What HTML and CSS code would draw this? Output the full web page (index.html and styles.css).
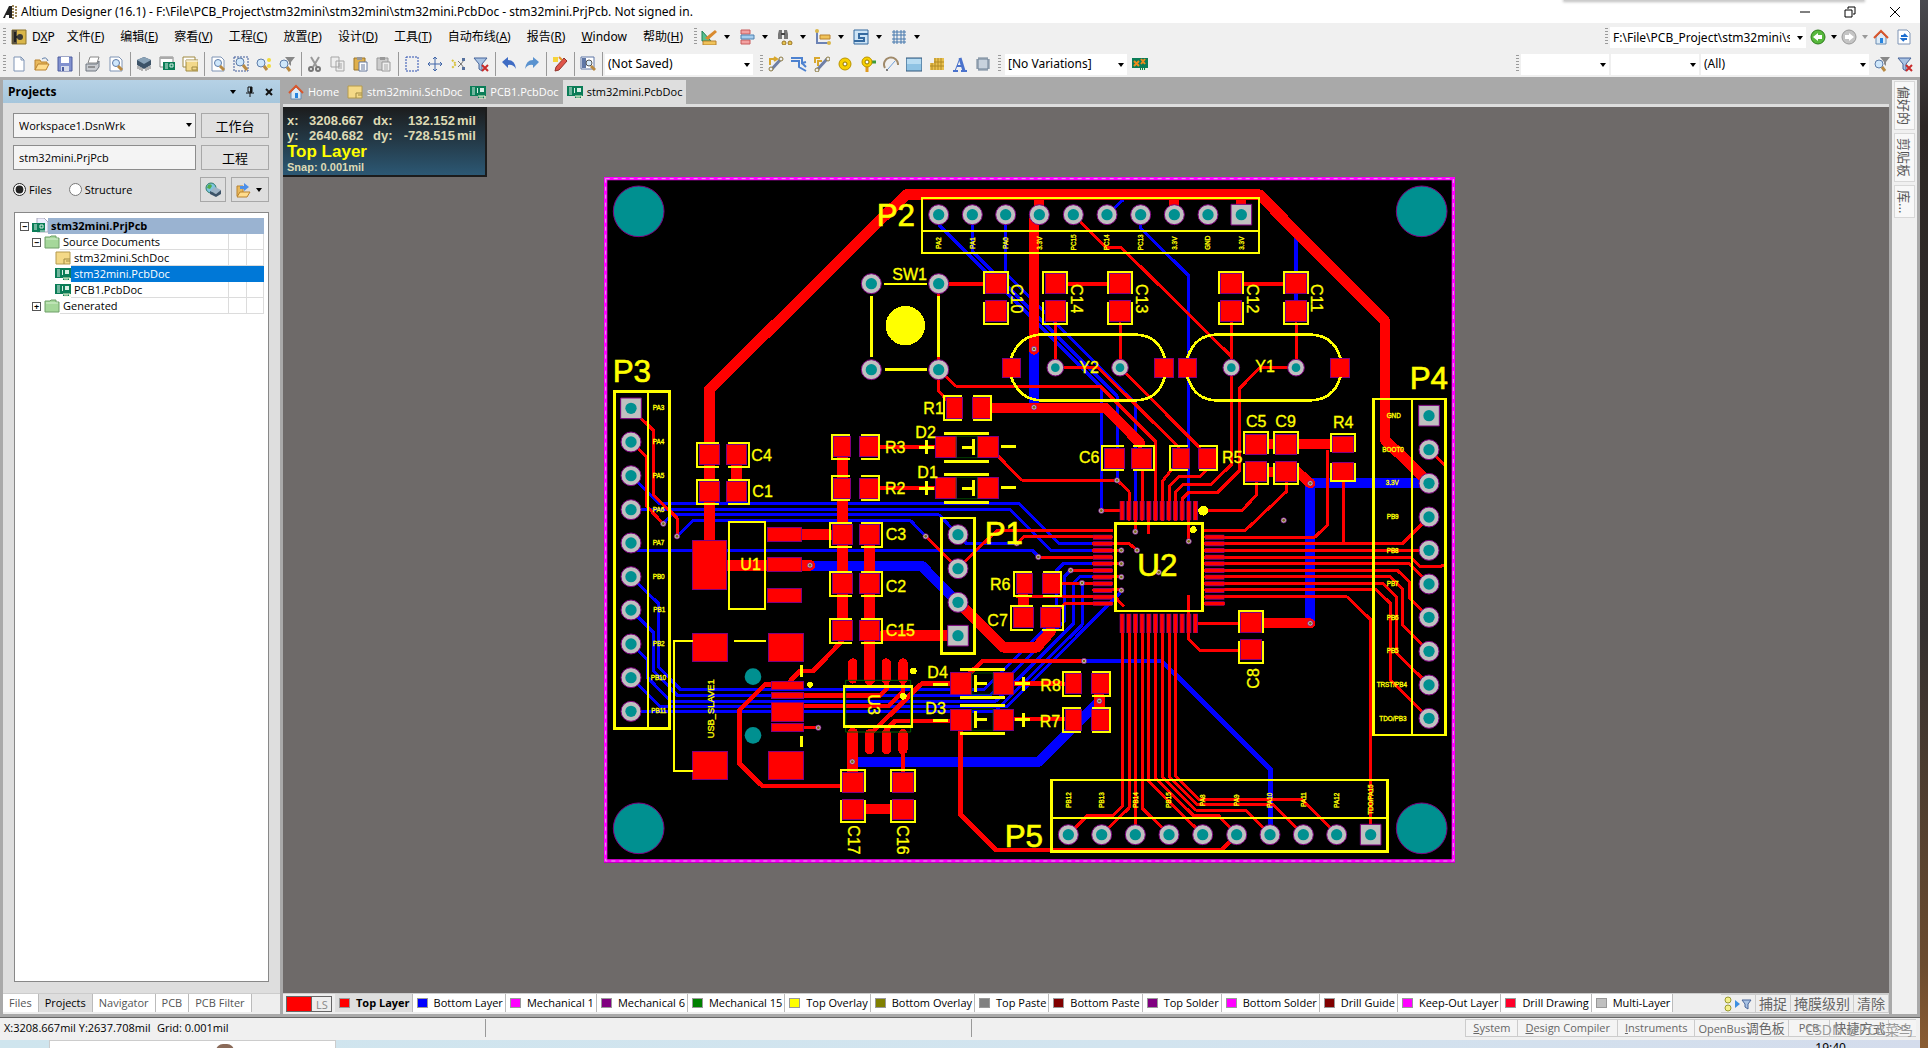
FILE: index.html
```html
<!DOCTYPE html>
<html lang="zh-CN">
<head>
<meta charset="utf-8">
<title>Altium Designer (16.1)</title>
<link rel="stylesheet" href="styles.css">
</head>
<body>
<svg class="defs" aria-hidden="true">
  <defs>
    <symbol id="i-logo" viewBox="0 0 16 16"><path d="M1 14 7 2h3v12H7v-3H4l-1 3z" fill="#222"/><path d="M11 1v14M14 2v12" stroke="#a08a5c" stroke-width="2" stroke-dasharray="2 1"/></symbol>
    <symbol id="i-dxp" viewBox="0 0 16 16"><path d="M1 1h14v14H1z" fill="#d9b64a" stroke="#8d742b"/><path d="M1 1h5v14H1z" fill="#5c5440"/><path d="M4 3v10M4 8h3" stroke="#222" stroke-width="2"/><circle cx="9" cy="8" r="3" fill="#3b3a36"/></symbol>
    <symbol id="i-new" viewBox="0 0 16 16"><path d="M3 1h7l3 3v11H3z" fill="#fff" stroke="#7f94b5"/><path d="M10 1v3h3" fill="none" stroke="#7f94b5"/></symbol>
    <symbol id="i-open" viewBox="0 0 16 16"><path d="M1 14V4h5l1 2h6v2" fill="#e9b95c" stroke="#b9822e"/><path d="m1 14 3-6h11l-3 6z" fill="#ffdc8c" stroke="#b9822e"/><path d="M8 3q4-3 6 2" fill="none" stroke="#5d7ca8"/></symbol>
    <symbol id="i-save" viewBox="0 0 16 16"><path d="M1 1h14v14H1z" fill="#8191cf" stroke="#4c5d9f"/><path d="M4 1h8v6H4z" fill="#fff"/><path d="M4 10h8v5H4z" fill="#d6dcec"/><path d="M5 11h2v4H5z" fill="#4c5d9f"/></symbol>
    <symbol id="i-print" viewBox="0 0 16 16"><path d="m5 1 9 0-2 6H3z" fill="#fff" stroke="#888"/><path d="M1 8h11l2-3v6l-3 4H1z" fill="#c9ccd1" stroke="#6f7680"/><path d="M3 11h7" stroke="#555"/></symbol>
    <symbol id="i-zoompage" viewBox="0 0 16 16"><path d="M2 1h9l3 3v11H2z" fill="#fff" stroke="#7f94b5"/><circle cx="8" cy="7" r="3.500" fill="#cfe7fb" stroke="#5d7ca8"/><path d="m10 10 4 4" stroke="#b98a43" stroke-width="3"/></symbol>
    <symbol id="i-chip" viewBox="0 0 16 16"><path d="m8 1 7 3v5l-7 4-7-4V4z" fill="#3d5368"/><path d="m8 1 7 3-7 4-7-4z" fill="#8aa3b8"/><path d="M2 10v3M4 11v3M6 12v3M10 12v3M12 11v3M14 10v3" stroke="#777"/></symbol>
    <symbol id="i-pcb" viewBox="0 0 16 16"><path d="M0 2h16v10h-2v2H8v-2H0z" fill="#0b7d57"/><path d="M2 4h3M2 6h3M2 8h3M2 10h3" stroke="#d8efe5"/><path d="M7 4h1v5H7zM10 4h4v4h-4z" fill="#d8efe5"/><path d="M8 12h7v3M10 12v3M12 12v3" stroke="#e8f4d0" fill="none"/></symbol>
    <symbol id="i-pcbwin" viewBox="0 0 16 16"><path d="M1 1h13v10H1z" fill="#fff" stroke="#888"/><path d="M1 1h13v2H1z" fill="#aaa"/><path d="M4 6h12v8H4z" fill="#0b7d57"/><path d="M6 8h3M6 10h3M6 12h3M11 8h3v3h-3z" stroke="#d8efe5" fill="none"/></symbol>
    <symbol id="i-sheets" viewBox="0 0 16 16"><path d="M1 1h12v10H1z" fill="#fff" stroke="#a08a43"/><path d="M4 4h12v11H4z" fill="#f2d88a" stroke="#a08a43"/><path d="M4 5h12" stroke="#fff"/><path d="M10 11h5v3h-5z" fill="none" stroke="#a08a43"/></symbol>
    <symbol id="i-sch" viewBox="0 0 16 16"><path d="M1 2h14v12H1z" fill="#f4d987" stroke="#b49a4e"/><path d="M9 9h6M9 9v5M11 11h4" fill="none" stroke="#a08a43"/></symbol>
    <symbol id="i-zoomsel" viewBox="0 0 16 16"><path d="M1 1h14v14H1z" fill="none" stroke="#3f5b9b" stroke-dasharray="2 1"/><circle cx="7" cy="6" r="4" fill="#cfe7fb" stroke="#5d7ca8"/><path d="m10 9 4 5" stroke="#b98a43" stroke-width="3"/></symbol>
    <symbol id="i-zoompt" viewBox="0 0 16 16"><circle cx="5" cy="7" r="4" fill="#cfe7fb" stroke="#5d7ca8"/><path d="m8 10 3 4" stroke="#b98a43" stroke-width="3"/><circle cx="13" cy="4" r="2" fill="#f1dc3c"/><circle cx="13" cy="10" r="2" fill="#f1dc3c"/></symbol>
    <symbol id="i-zoomflt" viewBox="0 0 16 16"><path d="M6 1h10l-4 5v4l-2-2V6z" fill="#888"/><circle cx="5" cy="8" r="4" fill="#cfe7fb" stroke="#5d7ca8"/><path d="m8 11 3 4" stroke="#b98a43" stroke-width="3"/></symbol>
    <symbol id="i-cut" viewBox="0 0 16 16"><path d="M4 1l6 10M12 1 6 11" stroke="#999" stroke-width="2"/><circle cx="4" cy="13" r="2" fill="none" stroke="#777" stroke-width="2"/><circle cx="11" cy="13" r="2" fill="none" stroke="#777" stroke-width="2"/></symbol>
    <symbol id="i-copy" viewBox="0 0 16 16"><path d="M1 1h8v10H1zM6 5h8v10H6z" fill="#eee" stroke="#a5a5a5"/><path d="M8 8h4M8 10h4M8 12h4" stroke="#a5a5a5"/></symbol>
    <symbol id="i-paste" viewBox="0 0 16 16"><path d="M1 2h11v12H1z" fill="#e0b04c" stroke="#9a7428"/><path d="M4 1h5v3H4z" fill="#999"/><path d="M6 6h8v9H6z" fill="#fff" stroke="#66789c"/><path d="M8 9h4M8 11h4M8 13h4" stroke="#66789c"/></symbol>
    <symbol id="i-pasteg" viewBox="0 0 16 16"><path d="M1 2h11v12H1z" fill="#ccc" stroke="#999"/><path d="M4 1h5v3H4z" fill="#999"/><path d="M6 6h8v9H6z" fill="#eee" stroke="#999"/><path d="M8 9h4M8 11h4M8 13h4" stroke="#aaa"/></symbol>
    <symbol id="i-marq" viewBox="0 0 16 16"><path d="M2 1h12v14H2z" fill="none" stroke="#2a4fb0" stroke-dasharray="2 1"/></symbol>
    <symbol id="i-move" viewBox="0 0 16 16"><path d="M8 1v14M1 8h14M6 3l2-2 2 2M6 13l2 2 2-2M3 6 1 8l2 2M13 6l2 2-2 2" fill="none" stroke="#3f65a8"/></symbol>
    <symbol id="i-desel" viewBox="0 0 16 16"><path d="m2 4 4 4-4 4" fill="none" stroke="#d8c23a" stroke-width="2" stroke-dasharray="2 1"/><path d="m8 5 3 3-3 3M14 4l-3 4 3 4" fill="none" stroke="#777"/><path d="M12 2h3v3h-3zM12 11h3v3h-3z" fill="#56719d"/></symbol>
    <symbol id="i-clear" viewBox="0 0 16 16"><path d="M1 2h13L9 8v7l-3-2V8z" fill="#a9c3e4" stroke="#47659a"/><path d="m9 9 6 6M15 9l-6 6" stroke="#c92b2b" stroke-width="2"/></symbol>
    <symbol id="i-undo" viewBox="0 0 16 16"><path d="m1 6 6-5v3q7 0 8 9-3-5-8-4v3z" fill="#3f6cc4"/></symbol>
    <symbol id="i-redo" viewBox="0 0 16 16"><path d="m15 6-6-5v3Q2 4 1 13q3-5 8-4v3z" fill="#5a92cf"/></symbol>
    <symbol id="i-pen" viewBox="0 0 16 16"><path d="m3 15 1-4 8-9 3 3-8 9z" fill="#e0554a" stroke="#93342c"/><path d="M1 1h5v5H1z" fill="#f6d43a"/><path d="m7 1 3 3" stroke="#e7962e" stroke-width="2"/></symbol>
    <symbol id="i-browse" viewBox="0 0 16 16"><path d="M1 1h13v12H1z" fill="#fff" stroke="#5f77a6"/><path d="M2 2h4v10H2z" fill="#5f77a6"/><circle cx="9" cy="7" r="3" fill="#d8ecfc" stroke="#555"/><path d="m11 10 4 4" stroke="#b98a43" stroke-width="3"/></symbol>
    <symbol id="i-route" viewBox="0 0 16 16"><path d="M2 9V3h6M6 1l3 2-3 2" fill="none" stroke="#d9a82e" stroke-width="2"/><path d="m3 14 10-11" stroke="#6f7fa5" stroke-width="3"/><circle cx="13" cy="3" r="2" fill="#eee" stroke="#8b7a42"/><circle cx="3" cy="13" r="2" fill="#eee" stroke="#8b7a42"/></symbol>
    <symbol id="i-mroute" viewBox="0 0 16 16"><path d="M1 7V2h5M4 10V5h4" fill="none" stroke="#d9a82e" stroke-width="2"/><path d="m3 14 10-11" stroke="#6f7fa5" stroke-width="3"/><circle cx="14" cy="3" r="2" fill="#eee" stroke="#8b7a42"/><circle cx="3" cy="14" r="2" fill="#eee" stroke="#8b7a42"/></symbol>
    <symbol id="i-diff" viewBox="0 0 16 16"><path d="M0 2h11v5l4-1M0 5h8v6l7 4M11 7l4 4" fill="none" stroke="#4d82d0" stroke-width="2"/></symbol>
    <symbol id="i-pad" viewBox="0 0 16 16"><circle cx="8" cy="8" r="6" fill="#f7d000" stroke="#bb9400"/><circle cx="8" cy="8" r="2" fill="#fff" stroke="#8f7300"/></symbol>
    <symbol id="i-via" viewBox="0 0 16 16"><path d="M8 6h8" stroke="#3b9b3b" stroke-width="3"/><path d="M7 9v7" stroke="#e09a1e" stroke-width="3"/><circle cx="7" cy="6" r="5" fill="#f7d000" stroke="#bb9400"/><circle cx="7" cy="6" r="2" fill="#fff" stroke="#8f7300"/></symbol>
    <symbol id="i-arc" viewBox="0 0 16 16"><path d="M2 12A7 7 0 1 1 15 9" fill="none" stroke="#a08a6a" stroke-width="2"/><path d="m5 13 7-8" stroke="#6f9fd8"/><circle cx="4" cy="14" r="1" fill="#555"/></symbol>
    <symbol id="i-fill" viewBox="0 0 16 16"><path d="M0 2h16v13H0z" fill="#8fc3e4" stroke="#33567a"/><path d="M1 3h14v5H1z" fill="#b8dcf2"/></symbol>
    <symbol id="i-poly" viewBox="0 0 16 16"><path d="M5 2h10v12H1V7h4z" fill="#e9c04e"/><path d="M3 7v7M6 2v12M9 2v12M12 2v12M1 10h14M5 6h10" stroke="#b08a25"/></symbol>
    <symbol id="i-text" viewBox="0 0 16 16"><path d="m3 15 5-13" fill="none" stroke="#4a72cc"/><path d="m8 2 4 13" fill="none" stroke="#4a72cc" stroke-width="3"/><path d="M5 10h6M1 15h5M9 15h6" fill="none" stroke="#4a72cc" stroke-width="2"/></symbol>
    <symbol id="i-comp" viewBox="0 0 16 16"><path d="M4 1v14M6 1v14M8 1v14M10 1v14M12 1v14M1 4h14M1 6h14M1 8h14M1 10h14M1 12h14" stroke="#6b7e93"/><path d="M3 3h10v10H3z" fill="#c8d2dd" stroke="#6b7e93"/></symbol>
    <symbol id="i-var" viewBox="0 0 16 16"><path d="M0 2h16v10h-2v2H8v-2H0z" fill="#0b7d57"/><path d="m2 5 5 5M7 5l-5 5M9 3l4 5M13 3 9 8" stroke="#ef8b1c" stroke-width="2"/><path d="M9 13h6" stroke="#e8f4d0" stroke-width="2" stroke-dasharray="1 1"/></symbol>
    <symbol id="i-draw" viewBox="0 0 16 16"><path d="M1 2v10h9z" fill="#57c08e" stroke="#1f8257"/><path d="m4 9 10-8 2 2-9 8z" fill="#d98a2e"/><path d="M2 12h13v4H2z" fill="#f0c35a" stroke="#b9822e"/></symbol>
    <symbol id="i-align" viewBox="0 0 16 16"><path d="M2 1h9v4H2zM2 11h9v4H2z" fill="#f3a1a1" stroke="#c65b5b"/><path d="M2 6h13v4H2z" fill="#a6cdee" stroke="#4e81b0"/></symbol>
    <symbol id="i-find" viewBox="0 0 16 16"><path d="M2 1h3v9H1V5zM7 1h3l1 4v5H7z" fill="#777"/><path d="M4 4h4v2H4z" fill="#444"/><circle cx="7" cy="14" r="2" fill="#e6c44f" stroke="#9a7428"/><circle cx="13" cy="14" r="2" fill="#e6c44f" stroke="#9a7428"/></symbol>
    <symbol id="i-dim" viewBox="0 0 16 16"><path d="M2 3v11h11" fill="none" stroke="#6c83b5" stroke-width="2"/><path d="M5 6h10v4H5z" fill="#f0c35a" stroke="#b9822e"/><circle cx="2" cy="2" r="2" fill="#d9b64a"/><circle cx="14" cy="14" r="2" fill="#d9b64a"/></symbol>
    <symbol id="i-room" viewBox="0 0 16 16"><path d="M1 1h14v14H1z" fill="#cde4f6" stroke="#356aa0"/><path d="M15 5H6v4h5v3H1" fill="none" stroke="#356aa0" stroke-width="2"/></symbol>
    <symbol id="i-grid" viewBox="0 0 16 16"><path d="M3 1v14M6 1v14M10 1v14M13 1v14M1 3h14M1 6h14M1 10h14M1 13h14" stroke="#4779ad"/></symbol>
    <symbol id="i-home" viewBox="0 0 16 16"><path d="M3 8v7h10V8L8 3z" fill="#dcebf7" stroke="#6b8db3"/><path d="m1 9 7-7 7 7" fill="none" stroke="#d9562b" stroke-width="2"/><path d="M7 9h3v5H7z" fill="#2684e0"/></symbol>
    <symbol id="i-back" viewBox="0 0 16 16"><circle cx="8" cy="8" r="7" fill="#57b83c" stroke="#2c7d1a"/><path d="m3 8 5-4v2h4v4H8v2z" fill="#fff"/></symbol>
    <symbol id="i-fwd" viewBox="0 0 16 16"><circle cx="8" cy="8" r="7" fill="#c4c4c4" stroke="#999"/><path d="M13 8 8 4v2H4v4h4v2z" fill="#fff"/></symbol>
    <symbol id="i-refresh" viewBox="0 0 16 16"><path d="M2 1h9l3 3v11H2z" fill="#fff" stroke="#7f94b5"/><path d="M5 7h5l-2-2M11 10H6l2 2" fill="none" stroke="#1f6fd0" stroke-width="2"/></symbol>
    <symbol id="i-globe" viewBox="0 0 16 16"><circle cx="6" cy="6" r="5" fill="#7fc3e0" stroke="#2c7d6a"/><path d="M3 3q3-2 4 1L5 7 2 6z" fill="#4fae4a"/><path d="m10 5 6 3-5 4-6-3z" fill="#9fb4c6"/><path d="m5 9 6 3 5-4v4l-5 3-6-3z" fill="#3d5368"/></symbol>
    <symbol id="i-openp" viewBox="0 0 16 16"><path d="M2 4h6v10H2z" fill="#e9b95c" stroke="#b9822e"/><path d="M5 4h4V1l5 4-5 4V7H5z" fill="#4d8fe8"/><path d="m2 15 3-5h10l-3 5z" fill="#ffdc8c" stroke="#b9822e"/></symbol>
    <symbol id="i-proj" viewBox="0 0 16 16"><path d="M5 0h7l4 4v10H5z" fill="#eef" stroke="#aab"/><path d="M0 5h13v9H0z" fill="#0b7d57"/><path d="M2 7h3M2 9h3M2 11h3M8 7h3v3H8zM8 13h5" stroke="#d8efe5" fill="none"/></symbol>
    <symbol id="i-folder" viewBox="0 0 16 16"><path d="M1 14V3h5l1-1h5v2h3v10z" fill="#a5d79a" stroke="#6f9f68"/><path d="M2 5h12" stroke="#d8f0d2"/></symbol>
    <symbol id="i-mask" viewBox="0 0 28 16"><circle cx="4" cy="4" r="3" fill="#f4f08a" stroke="#9a9a30"/><circle cx="4" cy="12" r="3" fill="#f4f08a" stroke="#9a9a30"/><path d="m11 4 5 4-5 4z" fill="#3d8fe0"/><path d="M18 4h9l-3 4v5l-3-2V8z" fill="#a9c3e4" stroke="#47659a"/></symbol>
    <symbol id="i-pin" viewBox="0 0 10 12"><path d="M3 1h4v5H3zM1 7h8M5 7v4" fill="none" stroke="#111"/><path d="M6 1v6" stroke="#111" stroke-width="2"/></symbol>
    <symbol id="i-close" viewBox="0 0 10 10"><path d="m2 2 6 6M8 2 2 8" stroke="#111" stroke-width="2"/></symbol>
    <symbol id="i-wmin" viewBox="0 0 12 12"><path d="M1 6h10" stroke="#000"/></symbol>
    <symbol id="i-wmax" viewBox="0 0 12 12"><path d="M1 4h7v7H1zM4 3V1h7v7H9" fill="none" stroke="#000"/></symbol>
    <symbol id="i-wclose" viewBox="0 0 12 12"><path d="m1 1 10 10M11 1 1 11" stroke="#000"/></symbol>

    <g id="pin"><circle r="30" fill="#c0c0c0" stroke="#800080" stroke-width="3"/><circle r="17" fill="#009090"/></g>
    <g id="pinsq"><path d="M-31-31h62v62h-62z" fill="#c0c0c0" stroke="#800080" stroke-width="3"/><circle r="17" fill="#009090"/></g>
    <g id="pinsm"><circle r="25" fill="#c0c0c0" stroke="#800080" stroke-width="3"/><circle r="13" fill="#009090"/></g>
    <g id="via"><circle r="8" fill="#c0c0c0" stroke="#800080" stroke-width="2"/><circle r="4" fill="#7a6414"/></g>
    <g id="hole"><circle r="76" fill="#009090" stroke="#800080" stroke-width="3"/></g>
    <g id="cap"><path class="pad" d="M-71-30h60v61h-60zM10-30h60v61h-60z"/><path class="ol" d="M-12-36H-78V36H-12M14-36H78V36H14"/></g>
    <g id="res"><path class="pad" d="M-64-30h50v61h-50zM14-30h54v61h-54z"/><path class="ol" d="M-16-36H-70V36H-16M16-36H71V36H16"/></g>
    <g id="dio"><path class="pad" d="M-95-32h62v64h-62zM31-32h64v64h-64z"/><path d="M-33-32h64v64h-64z" fill="none" stroke="#006000" stroke-width="2"/><path class="ol8" d="M-69-42H67M-69 42H67M19-25V25M-16 0H19M-143 0h44M-123-21v42M103-3h44"/></g>
  </defs>
</svg>

<div class="window">
  <header class="title"><svg class="ic"><use href="#i-logo"/></svg><h1>Altium Designer (16.1) - F:\File\PCB_Project\stm32mini\stm32mini\stm32mini.PcbDoc - stm32mini.PrjPcb. Not signed in.</h1>
    <div class="wbtns"><button aria-label="Minimize"><svg><use href="#i-wmin"/></svg></button><button aria-label="Restore"><svg><use href="#i-wmax"/></svg></button><button aria-label="Close"><svg><use href="#i-wclose"/></svg></button></div>
    <i class="shade"></i>
  </header>

  <nav class="bar menu">
    <i class="grip"></i>
    <button class="dxp"><svg class="ic"><use href="#i-dxp"/></svg><span>D<u>X</u>P</span></button>
    <button>文件(<u>F</u>)</button><button>编辑(<u>E</u>)</button><button>察看(<u>V</u>)</button><button>工程(<u>C</u>)</button><button>放置(<u>P</u>)</button><button>设计(<u>D</u>)</button><button>工具(<u>T</u>)</button><button>自动布线(<u>A</u>)</button><button>报告(<u>R</u>)</button><button><u>W</u>indow</button><button>帮助(<u>H</u>)</button>
    <i class="grip"></i>
    <button class="dd" aria-label="Utilities"><svg class="ic"><use href="#i-draw"/></svg></button><button class="dd" aria-label="Align"><svg class="ic"><use href="#i-align"/></svg></button><button class="dd" aria-label="Find"><svg class="ic"><use href="#i-find"/></svg></button><button class="dd" aria-label="Dimension"><svg class="ic"><use href="#i-dim"/></svg></button><button class="dd" aria-label="Room"><svg class="ic"><use href="#i-room"/></svg></button><button class="dd" aria-label="Grid"><svg class="ic"><use href="#i-grid"/></svg></button>
    <span class="fill"></span>
    <i class="grip"></i>
    <span class="drop path"><input aria-label="Path" value="F:\File\PCB_Project\stm32mini\s"></span>
    <button class="dd nav" aria-label="Back"><svg class="ic"><use href="#i-back"/></svg></button><button class="dd nav dim" aria-label="Forward"><svg class="ic"><use href="#i-fwd"/></svg></button><button class="tb" aria-label="Home"><svg class="ic"><use href="#i-home"/></svg></button><button class="tb" aria-label="Refresh"><svg class="ic"><use href="#i-refresh"/></svg></button>
  </nav>

  <div class="bar tools">
    <i class="grip"></i>
    <button class="tb" aria-label="New"><svg class="ic"><use href="#i-new"/></svg></button><button class="tb" aria-label="Open"><svg class="ic"><use href="#i-open"/></svg></button><button class="tb" aria-label="Save"><svg class="ic"><use href="#i-save"/></svg></button><i class="sep"></i>
    <button class="tb" aria-label="Print"><svg class="ic"><use href="#i-print"/></svg></button><button class="tb" aria-label="Preview"><svg class="ic"><use href="#i-zoompage"/></svg></button><i class="sep"></i>
    <button class="tb" aria-label="Devices"><svg class="ic"><use href="#i-chip"/></svg></button><button class="tb" aria-label="Workspace"><svg class="ic"><use href="#i-pcbwin"/></svg></button><button class="tb" aria-label="Sheets"><svg class="ic"><use href="#i-sheets"/></svg></button><i class="sep"></i>
    <button class="tb" aria-label="Fit document"><svg class="ic"><use href="#i-zoompage"/></svg></button><button class="tb" aria-label="Zoom area"><svg class="ic"><use href="#i-zoomsel"/></svg></button><button class="tb" aria-label="Zoom selected"><svg class="ic"><use href="#i-zoompt"/></svg></button><button class="tb" aria-label="Zoom filtered"><svg class="ic"><use href="#i-zoomflt"/></svg></button><i class="sep"></i>
    <button class="tb" aria-label="Cut"><svg class="ic"><use href="#i-cut"/></svg></button><button class="tb" aria-label="Copy"><svg class="ic"><use href="#i-copy"/></svg></button><button class="tb" aria-label="Paste"><svg class="ic"><use href="#i-paste"/></svg></button><button class="tb" aria-label="Stamp"><svg class="ic"><use href="#i-pasteg"/></svg></button><i class="sep"></i>
    <button class="tb" aria-label="Select"><svg class="ic"><use href="#i-marq"/></svg></button><button class="tb" aria-label="Move"><svg class="ic"><use href="#i-move"/></svg></button><button class="tb" aria-label="Deselect"><svg class="ic"><use href="#i-desel"/></svg></button><button class="tb" aria-label="Clear filter"><svg class="ic"><use href="#i-clear"/></svg></button><i class="sep"></i>
    <button class="tb" aria-label="Undo"><svg class="ic"><use href="#i-undo"/></svg></button><button class="tb" aria-label="Redo"><svg class="ic"><use href="#i-redo"/></svg></button><i class="sep"></i>
    <button class="tb" aria-label="Cross probe"><svg class="ic"><use href="#i-pen"/></svg></button><i class="sep"></i>
    <button class="tb" aria-label="Browse"><svg class="ic"><use href="#i-browse"/></svg></button><i class="sep"></i>
    <span class="drop saved"><select aria-label="View"><option>(Not Saved)</option></select></span>
    <i class="grip"></i>
    <button class="tb" aria-label="Route"><svg class="ic"><use href="#i-route"/></svg></button><button class="tb" aria-label="Differential pair"><svg class="ic"><use href="#i-diff"/></svg></button><button class="tb" aria-label="Multi route"><svg class="ic"><use href="#i-mroute"/></svg></button><button class="tb" aria-label="Pad"><svg class="ic"><use href="#i-pad"/></svg></button><button class="tb" aria-label="Via"><svg class="ic"><use href="#i-via"/></svg></button><button class="tb" aria-label="Arc"><svg class="ic"><use href="#i-arc"/></svg></button><button class="tb" aria-label="Fill"><svg class="ic"><use href="#i-fill"/></svg></button><button class="tb" aria-label="Polygon"><svg class="ic"><use href="#i-poly"/></svg></button><button class="tb" aria-label="Text"><svg class="ic"><use href="#i-text"/></svg></button><button class="tb" aria-label="Component"><svg class="ic"><use href="#i-comp"/></svg></button>
    <i class="grip"></i>
    <span class="drop vars"><select aria-label="Variations"><option>[No Variations]</option></select></span>
    <button class="tb" aria-label="Variants"><svg class="ic"><use href="#i-var"/></svg></button>
    <span class="fill"></span>
    <i class="grip"></i>
    <span class="drop flt"><select aria-label="Net"><option></option></select></span><span class="drop flt"><select aria-label="Class"><option></option></select></span><span class="drop all"><select aria-label="Filter"><option>(All)</option></select></span>
    <button class="tb" aria-label="Apply filter"><svg class="ic"><use href="#i-zoomflt"/></svg></button><button class="tb" aria-label="Clear"><svg class="ic"><use href="#i-clear"/></svg></button>
  </div>

  <main class="work">
    <aside class="panel">
      <header class="phead"><h2>Projects</h2><i class="tri"></i><svg class="pinic"><use href="#i-pin"/></svg><svg class="closeic"><use href="#i-close"/></svg></header>
      <div class="prow"><span class="drop box"><select aria-label="Workspace"><option>Workspace1.DsnWrk</option></select></span><button class="pbtn">工作台</button></div>
      <div class="prow"><span class="box"><input aria-label="Project" value="stm32mini.PrjPcb"></span><button class="pbtn">工程</button></div>
      <div class="prow opts"><label><input type="radio" name="v" checked>Files</label><label><input type="radio" name="v">Structure</label><span class="fill"></span><button class="sq" aria-label="Online"><svg class="ic"><use href="#i-globe"/></svg></button><button class="sq wide" aria-label="Open project"><svg class="ic"><use href="#i-openp"/></svg></button></div>
      <ul class="tree">
        <li class="proj"><b class="tog">−</b><svg class="ic"><use href="#i-proj"/></svg><span>stm32mini.PrjPcb</span></li>
        <li class="l1"><b class="tog">−</b><svg class="ic"><use href="#i-folder"/></svg><span>Source Documents</span></li>
        <li class="l2"><svg class="ic"><use href="#i-sch"/></svg><span>stm32mini.SchDoc</span></li>
        <li class="l2 sel"><svg class="ic"><use href="#i-pcb"/></svg><span>stm32mini.PcbDoc</span></li>
        <li class="l2"><svg class="ic"><use href="#i-pcb"/></svg><span>PCB1.PcbDoc</span></li>
        <li class="l1"><b class="tog">+</b><svg class="ic"><use href="#i-folder"/></svg><span>Generated</span></li>
      </ul>
      <div class="ptabs"><button>Files</button><button class="on">Projects</button><button>Navigator</button><button>PCB</button><button>PCB Filter</button></div>
    </aside>

    <section class="editor">
      <div class="docs"><button><svg class="ic"><use href="#i-home"/></svg>Home</button><button><svg class="ic"><use href="#i-sch"/></svg>stm32mini.SchDoc</button><button><svg class="ic"><use href="#i-pcb"/></svg>PCB1.PcbDoc</button><button class="on"><svg class="ic"><use href="#i-pcb"/></svg>stm32mini.PcbDoc</button></div>
      <div class="canvas">
        <div class="hud">
          <div class="coords"><span>x:</span><span>3208.667</span><span>dx:</span><span class="r">132.152</span><span>mil</span><span>y:</span><span>2640.682</span><span>dy:</span><span class="r">-728.515</span><span>mil</span></div>
          <p class="layer">Top Layer</p><p class="snap">Snap: 0.001mil</p>
        </div>
        <svg class="board" viewBox="12 22 2553 2058" role="img" aria-label="stm32mini board">
          <path d="M12 22h2553v2058H12z" fill="#000"/>
          <g class="blue">
            <path d="M1016 165 1505 654V1023M1117 150V245L1551 679V932M1217 150V310L1607 700V1050M1521 135 1570 90M1622 135V175L1766 318V1050"/>
            <path class="w12" d="M2088 205V420"/>
            <path class="w30" d="M1302 540V710M2131 941H2487M2131 941V1360"/>
            <g transform="translate(0 990)">
              <path d="M93-72 178 12H1258L1378 132H1485M93 30H1230L1353 153H1480M190 72 215 46H1018L1074 105M231 110 277 64H933L977 110M93 130 115 152H1297L1317 172M1074 105 1100 132H1250"/>
              <path d="M93 231 176 312V503L242 570H1152L1368 354V214L1390 192H1480M93 331 160 398V513L232 587H1170L1394 363V230L1412 212M93 433 142 480V533L212 604H1188L1420 372V250L1438 232H1480M93 534 180 621H1220L1560 280M93 635H1185L1446 376V250"/>
              <path class="w30" d="M630 198H965L1074 308M757 786H1317L1498 604"/>
              <path class="w14" d="M1452 484H1685L2012 810V975"/>
            </g>
          </g>
          <g class="red">
            <path class="w32" d="M328 1180V660L918 75H1978L2355 455V810L2487 940M409 860V965M727 860V1390"/>
            <path class="w30" d="M1302 150V540M1318 80V120M1723 80V120M1924 80V120M1150 714H1515L1620 820"/>
            <path class="w12" d="M1016 342H1160M1366 342H1560M1894 342H2088M835 832H1005M835 955H1005"/>
            <path d="M1016 342V385M1016 600 1067 649H1500L1667 816V1050M1016 560V665L1040 690M1190 855 1265 931H1551L1587 966V1050M1420 135 1518 233H1563L1894 560M1894 460V885L1835 943H1750L1726 967V1050M2088 594H1980L1918 657V903L1852 969H1765L1746 988V1050M1366 460V594M1560 460V594M2088 460V594M1366 594H1495L1735 832M1560 594 1800 835M1715 900 1687 935V1050M1820 900 1800 920H1738L1707 950V1050M1626 890V1050M1504 1023H1566M1969 940V977L1925 1023H1790M2060 940V965L1935 1083H1816M2183 845V1065L2145 1102H1816M2229 930V1122M2487 840 2535 888"/>
            <path class="w30" d="M2000 824H2030M2000 907H2030M2090 824H2195M2090 905 2131 941"/>
            <path d="M93 716 160 782V975L231 1045V1100M93 817 140 862V1010L190 1062"/>
            <g transform="translate(0 990)">
              <path class="w32" d="M600 105H690M380 197H630M845 408H1040M1074 308 1210 443H1310L1352 395M1270 290V320M795 928H875M809 140V540M758 700V820M1498 590V625"/>
              <path class="w14" d="M725 425 640 514H600L570 545M515 555H495L419 630V792L487 859H725M610 587H840L859 568V540M610 619H865L909 575V540M909 700V820M1100 530 1148 484H1452M1050 552H965L809 705M1050 664H885L859 690M1082 690V945L1188 1051H1865L1910 1005M1240 552H1390M1240 658H1390"/>
              <path d="M610 683H655M977 110 1074 205 1190 93H1536M1250 132 1270 112H1536"/>
              <path class="thick" d="M758 490V538M809 490V538M859 490V538M909 490V538M758 702V750M809 702V750M859 702V750M909 702V750"/>
            </g>
            <g transform="translate(1260 990)">
              <path d="M1275 195 1260 201H1200L1172 173H556M1227 52 1147 132H556M1227 152H556M1227 253 1167 192H556M1227 353 1167 293V245L1132 212H556M1227 455 1148 376V268L1112 232H556M1227 556 1130 460V293L1088 251H556M1227 656 1112 541V312L1070 271H556M1052 1005V360L982 292H556M556 311H612"/>
              <path d="M220 132H328L351 152M55 173H276M152 212H276M120 251H276M220 271H304M-8 292H285L309 317M276 311H135L115 330M220 152H304M220 192H304M220 232H304M530 371H660M506 290V418L540 453H660M346 62V97M386 62V100M506 62V125"/>
              <path d="M307 400V920L280 947H203L145 1005M327 400V925L245 1005M346 400V1005M366 400V925L447 1005M386 400V845L548 1005M406 400V835L520 947H595L650 1005M427 400V832L527 931H677L750 1005M447 400V830L532 915H760L850 1005M466 400V828L537 899H846L950 1005"/>
              <path class="w30" d="M730 371H871"/>
            </g>
          </g>
          <g transform="translate(1260 990)">
            <path class="pp" d="M299 33H536M299 371H536M248 105V318M584 105V318"/>
            <path class="pr" d="M301 33H536M301 371H536M248 107V318M584 107V318"/>
          </g>
          <g transform="translate(0 990)">
            <path class="pad" d="M277 122h103v149H277zM502 83h103v44H502zM502 175h103v42H502zM502 266h103v44H502zM277 400h106v84H277zM505 400h106v84H505zM277 754h106v84H277zM505 754h106v84H505zM514 545h97v24h-97zM514 578h97v18h-97zM514 608h97v56h-97zM514 670h97v24h-97z"/>
            <path d="M737 542h195v155H737z" fill="none" stroke="#006000" stroke-width="3"/>
            <circle cx="459" cy="531" r="25" fill="#009090"/><circle cx="459" cy="707" r="25" fill="#009090"/>
          </g>
          <path class="pad" d="M1207 565h55v57h-55zM1663 565h58v57h-58zM1735 565h55v57h-55zM2191 565h58v57h-58z"/>
          <g>
            <use href="#cap" x="369" y="855"/><use href="#cap" x="369" y="966"/><use href="#res" x="1103" y="714"/><use href="#res" x="766" y="831"/><use href="#res" x="766" y="955"/>
            <use href="#cap" x="1585" y="866"/><use href="#res" x="1781" y="866"/>
            <use href="#cap" transform="translate(1188 384) rotate(90)"/><use href="#cap" transform="translate(1366 384) rotate(90)"/><use href="#cap" transform="translate(1560 384) rotate(90)"/><use href="#cap" transform="translate(1894 384) rotate(90)"/><use href="#cap" transform="translate(2088 384) rotate(90)"/>
            <use href="#cap" transform="translate(1969 866) rotate(90)"/><use href="#cap" transform="translate(2059 866) rotate(90)"/><use href="#res" transform="translate(2229 864) rotate(90)"/>
            <use href="#cap" x="768" y="1095"/><use href="#cap" x="768" y="1242"/><use href="#cap" x="768" y="1383"/>
            <use href="#cap" transform="translate(759 1878) rotate(90)"/><use href="#cap" transform="translate(909 1878) rotate(90)"/><use href="#cap" transform="translate(1953 1401) rotate(90)"/>
            <use href="#res" x="1312" y="1242"/><use href="#cap" x="1311" y="1344"/><use href="#res" x="1459" y="1542"/><use href="#res" x="1459" y="1650"/>
            <use href="#dio" x="1101" y="832"/><use href="#dio" x="1101" y="955"/><use href="#dio" transform="translate(1146 1542) rotate(180)"/><use href="#dio" transform="translate(1146 1650) rotate(180)"/>
          </g>
          <g>
            <use href="#hole" x="116" y="125"/><use href="#hole" x="2465" y="125"/><use href="#hole" x="116" y="1976"/><use href="#hole" x="2465" y="1976"/>
            <use href="#pin" x="1016" y="135"/><use href="#pin" x="1117" y="135"/><use href="#pin" x="1217" y="135"/><use href="#pin" x="1318" y="135"/><use href="#pin" x="1420" y="135"/><use href="#pin" x="1521" y="135"/><use href="#pin" x="1622" y="135"/><use href="#pin" x="1723" y="135"/><use href="#pin" x="1824" y="135"/><use href="#pinsq" x="1924" y="135"/>
            <use href="#pinsq" x="93" y="716"/><use href="#pin" x="93" y="817"/><use href="#pin" x="93" y="918"/><use href="#pin" x="93" y="1020"/><use href="#pin" x="93" y="1120"/><use href="#pin" x="93" y="1221"/><use href="#pin" x="93" y="1321"/><use href="#pin" x="93" y="1423"/><use href="#pin" x="93" y="1524"/><use href="#pin" x="93" y="1625"/>
            <use href="#pinsq" x="2487" y="738"/><use href="#pin" x="2487" y="840"/><use href="#pin" x="2487" y="941"/><use href="#pin" x="2487" y="1042"/><use href="#pin" x="2487" y="1142"/><use href="#pin" x="2487" y="1243"/><use href="#pin" x="2487" y="1343"/><use href="#pin" x="2487" y="1445"/><use href="#pin" x="2487" y="1546"/><use href="#pin" x="2487" y="1646"/>
            <use href="#pin" x="1405" y="1995"/><use href="#pin" x="1505" y="1995"/><use href="#pin" x="1606" y="1995"/><use href="#pin" x="1707" y="1995"/><use href="#pin" x="1808" y="1995"/><use href="#pin" x="1910" y="1995"/><use href="#pin" x="2010" y="1995"/><use href="#pin" x="2110" y="1995"/><use href="#pin" x="2210" y="1995"/><use href="#pinsq" x="2312" y="1995"/>
            <use href="#pin" x="1074" y="1095"/><use href="#pin" x="1074" y="1197"/><use href="#pin" x="1074" y="1298"/><use href="#pinsq" x="1074" y="1398"/>
            <use href="#pin" x="814" y="342"/><use href="#pin" x="1016" y="342"/><use href="#pin" x="814" y="600"/><use href="#pin" x="1016" y="600"/>
            <use href="#pinsm" x="1366" y="594"/><use href="#pinsm" x="1560" y="594"/><use href="#pinsm" x="1894" y="594"/><use href="#pinsm" x="2088" y="594"/>
            <use href="#via" x="1302" y="538"/><use href="#via" x="1302" y="713"/><use href="#via" x="1551" y="932"/><use href="#via" x="1504" y="1023"/><use href="#via" x="2131" y="941"/><use href="#via" x="2051" y="1052"/><use href="#via" x="190" y="1062"/><use href="#via" x="231" y="1100"/><use href="#via" x="630" y="1187"/><use href="#via" x="977" y="1100"/><use href="#via" x="1250" y="1121"/><use href="#via" x="1315" y="1162"/><use href="#via" x="655" y="1674"/><use href="#via" x="757" y="1776"/><use href="#via" x="1412" y="1202"/><use href="#via" x="1446" y="1240"/><use href="#via" x="1452" y="1474"/><use href="#via" x="1498" y="1594"/><use href="#via" x="2131" y="1361"/><use href="#via" x="1606" y="1086"/><use href="#via" x="1611" y="1142"/><use href="#via" x="1564" y="1142"/><use href="#via" x="1564" y="1182"/><use href="#via" x="1564" y="1222"/><use href="#via" x="1564" y="1262"/><use href="#via" x="1766" y="1115"/><use href="#via" x="1676" y="1208"/>
          </g>
          <g class="silk">
            <path d="M966 84H1977V250H966zM144 666V1676M2436 688V1696M852 343H981M388 1056H495V1319H388zM279 1413H223V1805H279M402 1413H497"/>
            <path class="s8" d="M966 184H1977M43 666H208V1676H43zM2321 688H2537V1696H2321zM1354 1831H2363V2045H1354zM1354 1945H2363M1025 1045H1124V1451H1025zM814 378V563M1016 378V563M855 600H981M1546 1061H1808V1324H1546zM732 1550H936V1671H732zM604 1485V1523M604 1698V1733"/>
            <path class="s8" d="M1233 565Q1260 495 1326 495H1605Q1675 495 1694 565M1233 622Q1260 692 1326 692H1605Q1675 692 1694 622M1762 565Q1785 495 1850 495H2130Q2200 495 2221 565M1762 622Q1785 692 1850 692H2130Q2200 692 2221 622"/>
            <g fill="#ff0" stroke="none"><circle cx="916" cy="468" r="59"/><circle cx="1810" cy="1023" r="15"/><circle cx="1780" cy="1080" r="10"/><circle cx="630" cy="1545" r="9"/><circle cx="940" cy="1504" r="10"/><circle cx="910" cy="1580" r="10"/></g>
          </g>
          <g class="lab big"><text x="830" y="170">P2</text><text x="38" y="636">P3</text><text x="2429" y="658">P4</text><text x="1154" y="1124">P1</text><text x="1214" y="2031">P5</text><text x="1612" y="1218">U2</text></g>
          <g class="lab">
            <text x="877" y="330">SW1</text><text x="454" y="873">C4</text><text x="457" y="982">C1</text><text x="970" y="732">R1</text><text x="855" y="850">R3</text><text x="855" y="973">R2</text><text x="946" y="804">D2</text><text x="952" y="925">D1</text>
            <text x="1438" y="611">Y2</text><text x="1966" y="606">Y1</text><text x="1437" y="880">C6</text><text x="1866" y="880">R5</text><text x="1938" y="771">C5</text><text x="2026" y="771">C9</text><text x="2199" y="776">R4</text>
            <text x="421" y="1202">U1</text><text x="857" y="1110">C3</text><text x="857" y="1266">C2</text><text x="857" y="1398">C15</text><text x="1170" y="1262">R6</text><text x="1162" y="1370">C7</text><text x="982" y="1524">D4</text><text x="976" y="1634">D3</text><text x="1321" y="1563">R8</text><text x="1319" y="1673">R7</text>
            <text transform="translate(1234 343) rotate(90)">C10</text><text transform="translate(1414 343) rotate(90)">C14</text><text transform="translate(1608 343) rotate(90)">C13</text><text transform="translate(1941 343) rotate(90)">C12</text><text transform="translate(2134 343) rotate(90)">C11</text>
            <text transform="translate(745 1967) rotate(90)">C17</text><text transform="translate(892 1967) rotate(90)">C16</text><text transform="translate(805 1574) rotate(90)">U3</text><text transform="translate(1977 1557) rotate(-90)">C8</text>
          </g>
          <text class="lab usb" transform="translate(341 1706) rotate(-90)">USB_SLAVE1</text>
          <g class="lab tiny">
            <text x="158" y="722">PA3</text><text x="158" y="824">PA4</text><text x="158" y="926">PA5</text><text x="158" y="1026">PA6</text><text x="158" y="1127">PA7</text><text x="158" y="1228">PB0</text><text x="160" y="1328">PB1</text><text x="158" y="1430">PB2</text><text x="152" y="1530">PB10</text><text x="154" y="1631">PB11</text>
            <text x="2360" y="746">GND</text><text x="2347" y="846">BOOT0</text><text x="2357" y="947">3.3V</text><text x="2360" y="1048">PB9</text><text x="2360" y="1149">PB8</text><text x="2360" y="1250">PB7</text><text x="2360" y="1351">PB6</text><text x="2360" y="1451">PB5</text><text x="2330" y="1552">TRST/PB4</text><text x="2338" y="1653">TDO/PB3</text>
            <text transform="translate(1023 237) rotate(-90)">PA2</text><text transform="translate(1124 237) rotate(-90)">PA1</text><text transform="translate(1224 237) rotate(-90)">PA0</text><text transform="translate(1326 240) rotate(-90)">3.3V</text><text transform="translate(1427 242) rotate(-90)">PC15</text><text transform="translate(1527 242) rotate(-90)">PC14</text><text transform="translate(1628 242) rotate(-90)">PC13</text><text transform="translate(1731 240) rotate(-90)">3.3V</text><text transform="translate(1830 240) rotate(-90)">GND</text><text transform="translate(1931 240) rotate(-90)">3.3V</text>
            <text transform="translate(1412 1914) rotate(-90)">PB12</text><text transform="translate(1512 1914) rotate(-90)">PB13</text><text transform="translate(1613 1914) rotate(-90)">PB14</text><text transform="translate(1714 1914) rotate(-90)">PB15</text><text transform="translate(1814 1909) rotate(-90)">PA8</text><text transform="translate(1916 1909) rotate(-90)">PA9</text><text transform="translate(2017 1914) rotate(-90)">PA10</text><text transform="translate(2117 1911) rotate(-90)">PA11</text><text transform="translate(2218 1914) rotate(-90)">PA12</text><text transform="translate(2319 1935) rotate(-90)">TDO/PA15</text>
          </g>
          <path d="M17 27H2560V2074H17z" fill="none" stroke="#f0f" stroke-width="10"/>
          <path d="M17 27H2560V2074H17z" fill="none" stroke="#dcb4dc" stroke-width="3" stroke-dasharray="12 12"/>
        </svg>
      </div>
      <div class="layers"><button class="ls"><i></i>LS</button>
        <button class="lt on"><i style="background:#f00"></i>Top Layer</button><button class="lt"><i style="background:#00f"></i>Bottom Layer</button><button class="lt"><i style="background:#f0f"></i>Mechanical 1</button><button class="lt"><i style="background:#800080"></i>Mechanical 6</button><button class="lt"><i style="background:#008000"></i>Mechanical 15</button><button class="lt"><i style="background:#ff0"></i>Top Overlay</button><button class="lt"><i style="background:#808000"></i>Bottom Overlay</button><button class="lt"><i style="background:#808080"></i>Top Paste</button><button class="lt"><i style="background:#800000"></i>Bottom Paste</button><button class="lt"><i style="background:#800080"></i>Top Solder</button><button class="lt"><i style="background:#f0f"></i>Bottom Solder</button><button class="lt"><i style="background:#800000"></i>Drill Guide</button><button class="lt"><i style="background:#f0f"></i>Keep-Out Layer</button><button class="lt"><i style="background:#ff002a"></i>Drill Drawing</button><button class="lt"><i style="background:#c0c0c0"></i>Multi-Layer</button>
        <span class="fill"></span>
        <button class="mk" aria-label="Mask"><svg class="maskic"><use href="#i-mask"/></svg></button><button class="mk">捕捉</button><button class="mk">掩膜级别</button><button class="mk">清除</button>
      </div>
    </section>

    <aside class="side"><button>偏好的</button><button>剪贴板</button><button>库...</button></aside>
  </main>

  <footer class="status"><span class="pos">X:3208.667mil Y:2637.708mil</span><span class="gridv">Grid: 0.001mil</span><i></i><i></i>
    <div class="sb"><button><u>S</u>ystem</button><button><u>D</u>esign Compiler</button><button><u>I</u>nstruments</button><button class="cjk">OpenBus<b>调色板</b></button><button class="pcb">PCB</button><button class="cjk"><b>快捷方式</b></button><button>&gt;&gt;</button></div>
    <span class="mark">CSDN @PCB菜鸟</span>
  </footer>
  <div class="desk"><span class="card"><i></i></span><time>19:40</time></div>
</div>
<div class="edge"></div>
</body>
</html>
```
FILE: styles.css
```css
* { box-sizing: border-box; }
body { margin: 0; height: 100vh; display: grid; grid-template-columns: minmax(0, 1fr) 8px; overflow: hidden; font: 12px/16px "Noto Sans", "Noto Sans CJK SC", sans-serif; color: #000; }
button, input, select { font: inherit; color: inherit; border: 0; background: none; padding: 0; margin: 0; border-radius: 0; }
button { white-space: nowrap; }
h1, h2, p, ul { margin: 0; padding: 0; font: inherit; }
.defs { position: absolute; width: 0; height: 0; }
.ic { width: 16px; height: 16px; flex: none; display: block; }
.fill { flex: 1; }
.edge { background: linear-gradient(#4a4a50, #2c2624 12%, #34302f 60%, #6b4b2e 92%, #8a5c32); }
.window { display: flex; flex-direction: column; min-width: 0; height: 100vh; background: #f0f0f0; }

.title { position: relative; display: flex; align-items: center; gap: 3px; height: 23px; padding-left: 2px; background: #fff; flex: none; }
.wbtns { margin-left: auto; display: flex; gap: 33px; padding-right: 19px; }
.wbtns svg { width: 12px; height: 12px; display: block; }
.shade { position: absolute; right: 56px; top: 0; width: 300px; height: 1px; background: #ccc; box-shadow: 0 0 3px 1px #bbb; }

.bar { display: flex; align-items: center; flex: none; background: #f0f0f0; }
.menu { height: 28px; padding-right: 4px; }
.tools { height: 26px; padding-right: 3px; }
.grip { width: 3px; height: 18px; margin: 0 2px 0 3px; flex: none; background: repeating-linear-gradient(#9a9a9a 0 1px, #f0f0f0 1px 3px); }
.menu > button { padding: 0 8px; }
.menu > .dxp { display: flex; gap: 5px; padding: 0 4px 0 3px; }
.menu > .dd { display: flex; align-items: center; gap: 7px; width: 38px; padding: 0 0 0 2px; }
.dd::after, .tri { content: ""; border: 3px solid transparent; border-top: 4px solid #000; border-bottom: 0; }
.menu > .nav { width: 31px; gap: 5px; padding-left: 2px; }
.dim::after { border-top-color: #999; }
.tb, .menu > .tb { width: 23px; height: 24px; padding: 0 3px; flex: none; }
.sep { width: 1px; height: 24px; margin: 0 2px; background: #999; flex: none; }
.drop { position: relative; display: block; height: 21px; background: #fff; flex: none; margin-right: 2px; }
.drop select, .drop input { appearance: none; width: 100%; height: 100%; padding: 0 16px 0 3px; outline: 0; display: block; }
.drop::after { content: ""; position: absolute; right: 3px; top: 9px; border: 3px solid transparent; border-top: 4px solid #000; border-bottom: 0; }
.path { width: 196px; }
.saved { width: 148px; margin-right: 4px; }
.vars { width: 122px; margin-left: 2px; }
.flt { width: 88px; }
.all { width: 168px; }

.work { flex: 1; min-height: 0; display: flex; gap: 3px; padding: 3px 3px 3px; background: #a9a9a9; border-bottom: 1px solid #666; }
.panel, .docs, .layers, .status { font-family: "Open Sans", "Noto Sans CJK SC", sans-serif; font-size: 11px; }
.panel { width: 277px; flex: none; display: flex; flex-direction: column; background: #dedede; }
.phead { display: flex; align-items: center; gap: 9px; height: 23px; padding: 0 6px 0 5px; background: linear-gradient(#b6d2e6, #a6c6dc); }
.phead h2 { flex: 1; font-weight: bold; font-size: 12px; }
.pinic { width: 10px; height: 12px; }
.closeic { width: 10px; height: 10px; }
.prow { display: flex; gap: 5px; padding: 0 11px 0 10px; margin-top: 10px; height: 25px; align-items: stretch; }
.prow + .prow { margin-top: 7px; }
.box { flex: 1; height: auto; margin: 0; border: 1px solid #8c8c8c; background: #f4f4f4; }
.box input, .box select { width: 100%; height: 100%; padding-left: 5px; }
.pbtn { width: 68px; border: 1px solid #a8a8a8; background: #e0e0e0; font-size: 13px; }
.opts label { display: flex; align-items: center; gap: 3px; margin-right: 12px; }
.opts input { width: 13px; height: 13px; accent-color: #222; }
.sq { width: 26px; padding: 0 4px; border: 1px solid #a8a8a8; }
.sq.wide { width: 38px; display: flex; align-items: center; gap: 5px; padding: 0 3px; }
.sq.wide::after { content: ""; border: 3px solid transparent; border-top: 4px solid #000; border-bottom: 0; }
.tree { flex: 1; margin: 10px 11px 11px; padding: 5px 4px 0 5px; background: #fff; border: 1px solid #888; list-style: none; }
.tree li { display: flex; align-items: center; height: 16px; }
.tree .l1 { padding-left: 12px; }
.tree .l2 { padding-left: 35px; }
.tree span { flex: 1; padding-left: 3px; line-height: 15px; border-bottom: 1px solid #dcdcdc; background: linear-gradient(#dcdcdc, #dcdcdc) right 35px top / 1px 100% no-repeat, linear-gradient(#dcdcdc, #dcdcdc) right 17px top / 1px 100% no-repeat, linear-gradient(#dcdcdc, #dcdcdc) right top / 1px 100% no-repeat; }
.tree .proj span { font-weight: bold; background: #9ab3d1; border-color: #9ab3d1; }
.tree .sel span { background: #0078d7; border-color: #0078d7; color: #fff; }
.tog { width: 9px; height: 9px; border: 1px solid #555; font: bold 9px/7px "Open Sans", sans-serif; text-align: center; margin-right: 3px; flex: none; }
.ptabs { display: flex; height: 21px; background: #eee; border-top: 1px solid #ccc; }
.ptabs button { padding: 0 6px; background: #fff; color: #555; border-right: 1px solid #bbb; height: 18px; }
.ptabs .on { background: #dedede; color: #000; }

.editor { flex: 1; min-width: 0; display: flex; flex-direction: column; }
.docs { display: flex; height: 27px; padding-left: 1px; border-bottom: 3px solid #dedede; }
.docs button { display: flex; align-items: center; gap: 4px; padding: 0 4px; color: #fff; }
.docs .on { background: #dedede; color: #000; }
.canvas { position: relative; flex: 1; min-height: 0; background: #6e6a69; overflow: hidden; }
.hud { position: absolute; left: 0; top: 0; width: 204px; height: 70px; padding: 6px 4px; border: 1px solid #1c1c1c; border-width: 0 2px 2px 0; background: linear-gradient(#1c1c1c, #2c5874); color: #dedab4; font: bold 13px/15px "Liberation Sans", sans-serif; }
.coords { display: grid; grid-template-columns: 20px 62px 28px 52px 22px; column-gap: 2px; }
.coords .r { text-align: right; }
.layer { color: #ff0; font-size: 17px; line-height: 18px; }
.snap { font-size: 11px; line-height: 13px; }
.board { display: block; width: 851px; height: 686px; margin: 70px 0 0 321px; }

.blue path, .red path { fill: none; stroke-width: 9; stroke-linejoin: round; shape-rendering: crispEdges; }
.blue path { stroke: #00f; }
.red path { stroke: #f00; stroke-linecap: round; }
.blue .w30, .red .w30 { stroke-width: 30; }
.red .w32 { stroke-width: 32; }
.red .w12, .blue .w12 { stroke-width: 12; }
.red .w14, .blue .w14 { stroke-width: 14; }
.red .thick { stroke-width: 28; }
.pad { fill: #f00; stroke: #800080; stroke-width: 3; shape-rendering: crispEdges; }
.ol, .ol8 { fill: none; stroke: #ff0; stroke-width: 6; shape-rendering: crispEdges; }
.ol8 { stroke-width: 9; }
.pp, .pr { fill: none; stroke-width: 58; stroke: #800080; stroke-dasharray: 15 5; }
.pr { stroke: #f00; stroke-dasharray: 10 10; stroke-width: 56; }
.silk { fill: none; stroke: #ff0; stroke-width: 6; shape-rendering: crispEdges; }
.silk .s8 { stroke-width: 8; }
.lab { fill: #ff0; stroke: #ff0; stroke-width: 1px; font: 48px "Liberation Sans", sans-serif; }
.big { font-size: 94px; stroke-width: 2px; }
.usb { font-size: 28px; }
.tiny { font-size: 19px; }

.layers { display: flex; align-items: flex-start; height: 21px; background: #eee; border-top: 1px solid #ccc; }
.ls { display: flex; width: 46px; height: 16px; margin: 2px 3px; border: 1px solid #666; color: #888; gap: 4px; line-height: 15px; }
.ls i { width: 25px; height: 14px; background: #f00; border-right: 1px solid #666; }
.lt { display: flex; align-items: center; gap: 6px; height: 18px; padding: 0 2px 0 4px; background: #fff; border-right: 1px solid #bbb; }
.lt i { width: 11px; height: 10px; border: 1px solid #999; }
.lt.on { background: #dedede; font-weight: bold; }
.mk { height: 19px; padding: 0 3px; color: #666; font-size: 14px; border: 1px solid #ccc; border-left: 0; }
.maskic { width: 28px; height: 16px; display: block; }
.side { width: 25px; flex: none; padding: 1px 2px; background: #f0f0f0; display: flex; flex-direction: column; gap: 3px; }
.side button { writing-mode: vertical-rl; text-orientation: sideways; border: 1px solid #d8d8d8; background: #f8f8f8; padding: 4px 2px; font-size: 13px; color: #555; width: 21px; }

.status { position: relative; display: flex; align-items: center; height: 22px; flex: none; padding: 0 0 2px 4px; background: #f0f0f0; }
.pos { width: 153px; }
.gridv { width: 328px; }
.status > i { width: 486px; height: 18px; border-left: 1px solid #999; }
.sb { margin-left: auto; display: flex; padding-right: 4px; color: #666; }
.sb button { height: 18px; padding: 0 7px; border: 1px solid #ccc; border-right-width: 0; background: #f4f4f4; }
.sb .cjk { padding: 0 3px; }
.sb .pcb { padding: 0 10px; }
.sb b { font-weight: normal; font-size: 13px; }
.mark { position: absolute; right: 7px; top: 4px; font-size: 14px; color: #9a9a9a; }
.desk { display: flex; justify-content: space-between; height: 8px; flex: none; overflow: hidden; background: linear-gradient(90deg, #cfe5ee, #d2e4ef 60%, #d4dcec); padding: 0 74px 0 49px; }
.desk time { line-height: 16px; font-size: 12px; }
.card { display: flex; justify-content: center; width: 287px; height: 8px; padding: 3px 0 0 166px; background: #fff; border: 1px solid #ccc; border-bottom: 0; }
.card i { width: 18px; height: 14px; border-radius: 9px; background: #8a6a58; margin-right: auto; }
```
